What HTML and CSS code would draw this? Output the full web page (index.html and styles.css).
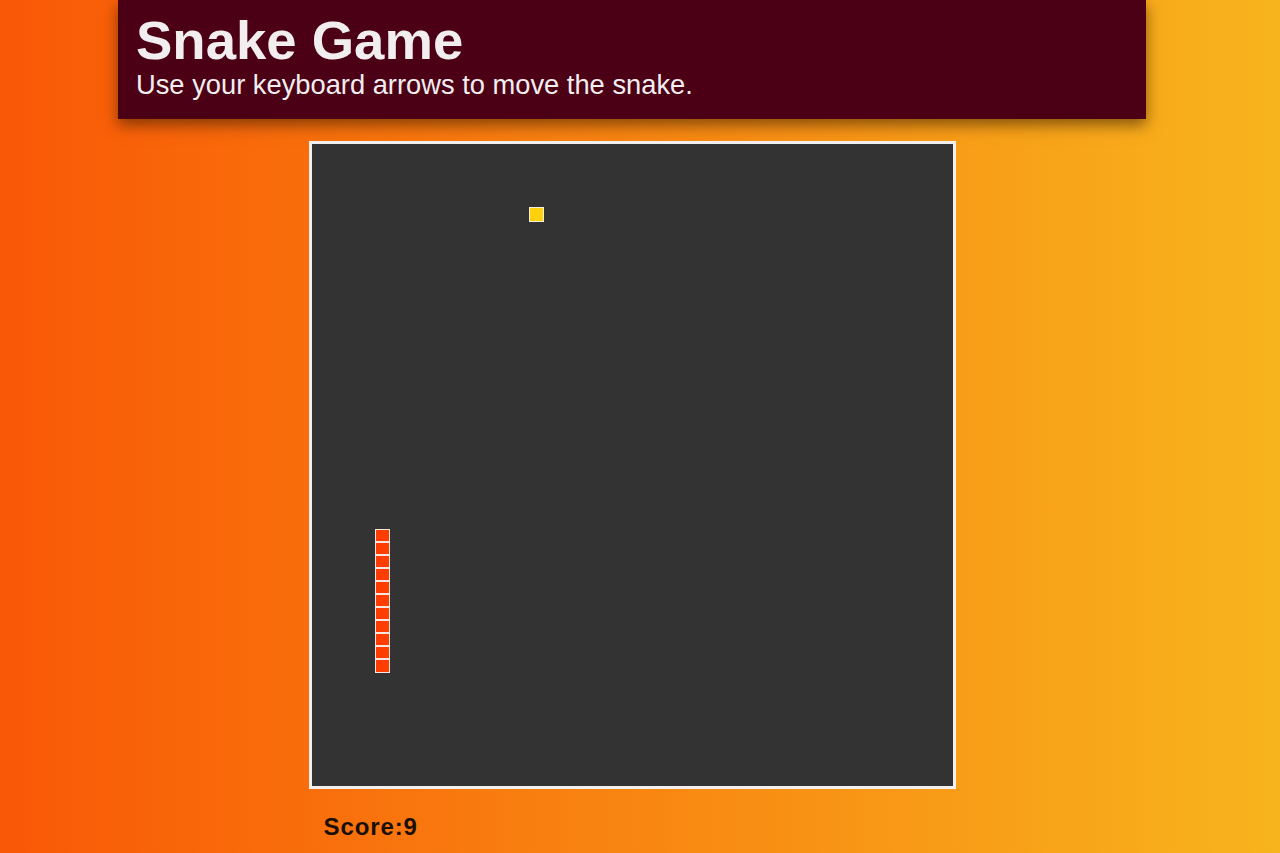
FILE: index.html
```html
<!DOCTYPE html>
<html>
<head>
<meta charset="utf-8">
<link rel="stylesheet" href="styles.css">
</head>
<body>
<div class="page">
  <header class="header">
    <h1 class="title">Snake Game</h1>
    <p class="subtitle">Use your keyboard arrows to move the snake.</p>
  </header>
  <main class="game">
    <div class="board">
      <svg class="canvas" width="641" height="642" viewBox="0 0 641 642">
        <rect x="0" y="0" width="641" height="642" fill="#333333"/>
        <rect x="217.5" y="63.5" width="14" height="14" fill="#ffd10c" stroke="#f4efd8" stroke-width="1"/>
        <g fill="#ff3d00" stroke="#f6e6df" stroke-width="1">
          <rect x="63.5" y="385.5" width="14" height="12"/>
          <rect x="63.5" y="398.5" width="14" height="12"/>
          <rect x="63.5" y="411.5" width="14" height="12"/>
          <rect x="63.5" y="424.5" width="14" height="12"/>
          <rect x="63.5" y="437.5" width="14" height="12"/>
          <rect x="63.5" y="450.5" width="14" height="12"/>
          <rect x="63.5" y="463.5" width="14" height="12"/>
          <rect x="63.5" y="476.5" width="14" height="12"/>
          <rect x="63.5" y="489.5" width="14" height="12"/>
          <rect x="63.5" y="502.5" width="14" height="12"/>
          <rect x="63.5" y="515.5" width="14" height="13"/>
        </g>
      </svg>
    </div>
    <div class="score">Score:9</div>
  </main>
</div>
</body>
</html>
```
FILE: styles.css
```css
html, body {
  margin: 0;
  padding: 0;
  height: 100%;
}
body {
  background: linear-gradient(to right, #f95806 0%, #f8b41d 100%);
  font-family: "Liberation Sans", Arial, sans-serif;
  overflow: hidden;
}
.page {
  width: 1264px;
  display: flex;
  flex-direction: column;
  align-items: center;
}
.header {
  width: 1028px;
  height: 119px;
  box-sizing: border-box;
  background: #4b0016;
  color: #f2eef0;
  padding: 10px 18px 0;
  box-shadow: 0 6px 14px rgba(40, 20, 0, 0.55);
}
.title {
  margin: 0;
  font-size: 54.5px;
  font-weight: bold;
  line-height: 61px;
}
.subtitle {
  margin: 0;
  font-size: 27.3px;
  line-height: 28px;
}
.game {
  margin-top: 22px;
  width: 647px;
}
.board {
  border: 3px solid #f1f0ef;
  width: 641px;
  height: 642px;
}
.canvas {
  display: block;
}
.score {
  padding: 24px 0 0 15px;
  font-size: 24px;
  font-weight: bold;
  color: #1a0f05;
  letter-spacing: 0.9px;
}
```
